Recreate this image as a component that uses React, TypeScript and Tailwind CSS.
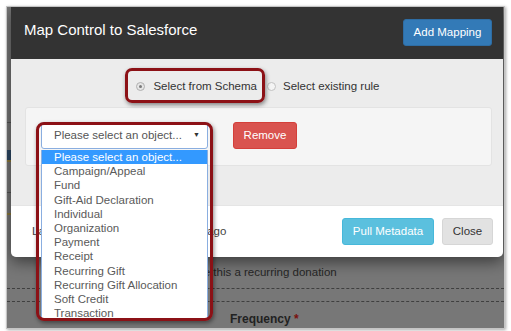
const objects = [
  "Please select an object...",
  "Campaign/Appeal",
  "Fund",
  "Gift-Aid Declaration",
  "Individual",
  "Organization",
  "Payment",
  "Receipt",
  "Recurring Gift",
  "Recurring Gift Allocation",
  "Soft Credit",
  "Transaction",
];

const App = () => {
  return (
    <div className="w-[511px] h-[331px] bg-white pt-[6px] pl-[6px] font-['Liberation_Sans',Arial,sans-serif]">
      <div className="w-[499px] h-[323px] border border-[#c4c4c4] bg-[#777] overflow-hidden flex flex-col shadow-[1px_1px_3px_rgba(0,0,0,0.35)]">
        <div className="flex h-[250px] shrink-0">
          {/* strip of page behind the backdrop */}
          <div className="w-[4px] flex flex-col">
            <div className="h-[115px]" />
            <div className="border-t border-dashed border-[#555]" />
            <div className="h-[27px]" />
            <div className="h-[10px] bg-[#2c4764]" />
            <div className="h-[2px] bg-[#8c7a3c]" />
            <div className="h-[30px]" />
            <div className="border-t border-dashed border-[#555]" />
            <div className="h-[20px]" />
            <div className="h-[2px] bg-[#8c7a3c]" />
          </div>

          {/* modal */}
          <div className="relative z-10 w-[492px] flex flex-col rounded-b-[5px] shadow-[0_5px_15px_rgba(0,0,0,0.5)]">
            <div className="h-[52px] bg-[#333] flex justify-between items-start pt-[12px] pl-[13px] pr-[11px]">
              <h4 className="text-[15px] leading-[18px] mt-[1.5px] text-white">Map Control to Salesforce</h4>
              <button className="w-[89px] h-[27px] rounded-[3px] bg-[#337ab7] border border-[#2e6da4] text-white text-[11.5px]">
                Add Mapping
              </button>
            </div>

            <div className="h-[146px] bg-[#ececec] pt-[19px]">
              <div className="flex justify-center items-center h-[16px] text-[11.5px] leading-[16px] text-[#333] pl-[2px]">
                <span className="relative flex items-center">
                  <span className="w-[9px] h-[9px] rounded-full border border-[#b0b0b0] bg-[#e6e6e6] flex items-center justify-center">
                    <span className="w-[3px] h-[3px] rounded-full bg-[#7a7a7a]" />
                  </span>
                  <span className="ml-[8px]">Select from Schema</span>
                  <span className="absolute -left-[11px] -right-[8px] -top-[10px] -bottom-[9px] border-[3px] border-[#8c1116] rounded-[7px] shadow-[1px_2px_4px_rgba(0,0,0,0.45)]" />
                </span>
                <span className="ml-[10px] w-[9px] h-[9px] rounded-full border border-[#c2c2c2] bg-[#f4f4f4]" />
                <span className="ml-[7px]">Select existing rule</span>
              </div>

              <div className="mt-[13px] ml-[14px] mr-[11px] h-[59px] bg-[#f5f5f5] border border-[#e3e3e3] rounded-[3px] flex items-start pt-[14px] pl-[15px]">
                <div className="relative w-[167px] h-[27px] bg-white border border-[#8aaee0] rounded-[3px] flex items-center pl-[12px] pr-[7px] text-[11.5px] text-[#555]">
                  <span className="flex-1">Please select an object...</span>
                  <span className="text-[7px] text-[#333]">▼</span>

                  <div className="absolute z-20 left-[-1px] top-[27px] w-[167px] h-[169px] overflow-hidden bg-white border-x border-[#8aaee0] text-[11.5px] leading-[14.2px] text-[#5a5a5a]">
                    {objects.map((name, i) => (
                      <div key={name} className={i === 0 ? "pl-[12px] bg-[#3399ff] text-white" : "pl-[12px]"}>
                        {name}
                      </div>
                    ))}
                  </div>

                  <div className="absolute z-30 left-[-6px] top-[-1px] w-[177px] h-[199px] border-[3px] border-[#8c1116] rounded-[8px] shadow-[1px_2px_4px_rgba(0,0,0,0.45)]" />
                </div>
                <button className="ml-[25px] w-[64px] h-[27px] rounded-[3px] bg-[#d9534f] border border-[#d43f3a] text-white text-[11.5px]">
                  Remove
                </button>
              </div>
            </div>

            <div className="h-[52px] bg-white border-t border-[#e5e5e5] rounded-b-[5px] flex items-center pl-[21px] pr-[10px] text-[11.5px]">
              <span className="flex-1 text-[#444]">Last Metadata Pull: about 2 hours ago</span>
              <button className="w-[92px] h-[27px] rounded-[3px] bg-[#5bc0de] border border-[#46b8da] text-white">
                Pull Metadata
              </button>
              <button className="ml-[8px] w-[51px] h-[27px] rounded-[3px] bg-[#e2e2e2] border border-[#d6d6d6] text-[#333]">
                Close
              </button>
            </div>
          </div>
        </div>

        {/* page behind the backdrop */}
        <div className="flex flex-col text-[11.5px] leading-[14px] text-[#262626]">
          <div className="pt-[8px] pl-[175px]">Make this a recurring donation</div>
          <div className="mt-[9px] border-t border-dashed border-[#3f3f3f]" />
          <div className="mt-[12px] border-t border-dashed border-[#3f3f3f]" />
          <div className="mt-[10px] pl-[223px] text-[12px] font-bold text-[#222]">
            Frequency <span className="text-[#7a1010]">*</span>
          </div>
        </div>
      </div>
    </div>
  );
};

export default App;
